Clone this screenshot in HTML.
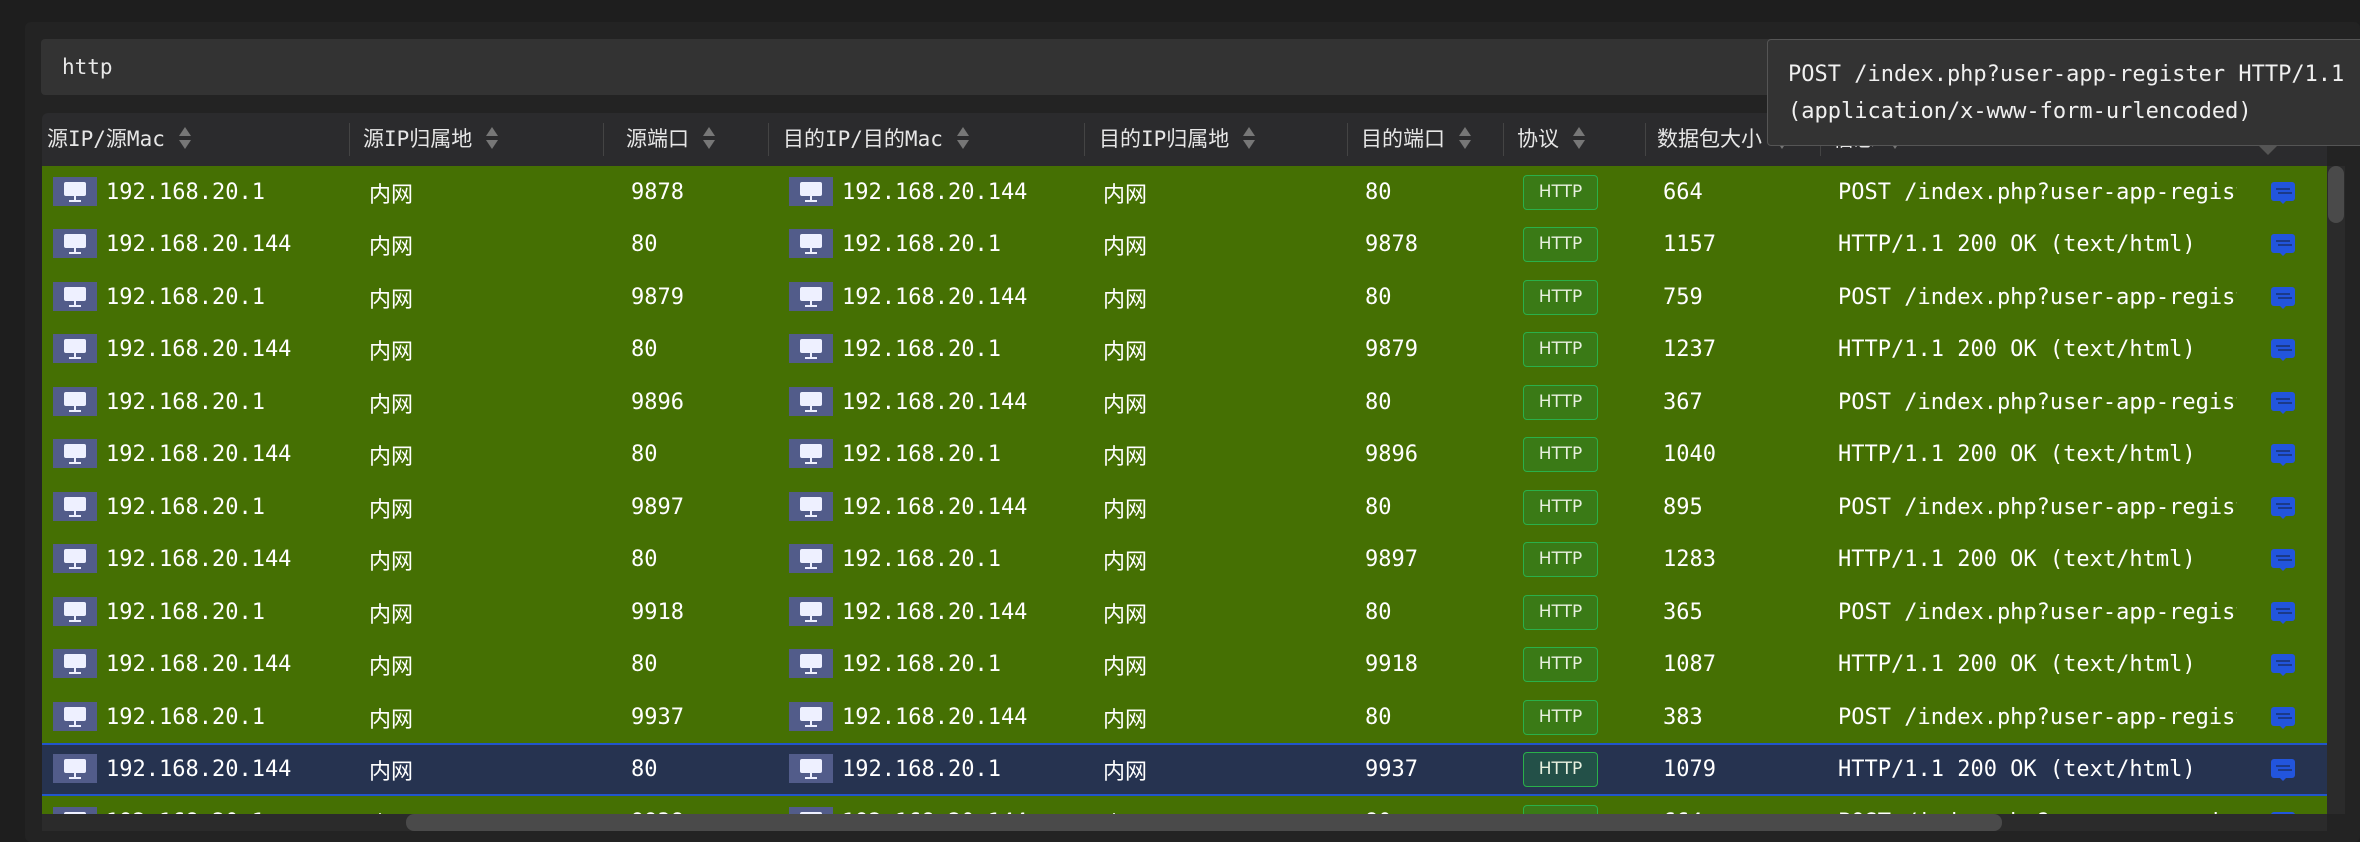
<!DOCTYPE html>
<html><head><meta charset="utf-8">
<style>
*{margin:0;padding:0;box-sizing:border-box}
body{width:2360px;height:842px;background:#1e1e1e;overflow:hidden;position:relative;font-family:"DejaVu Sans Mono","Liberation Mono","Noto Sans CJK SC",monospace;color:#fff}
.panel{position:absolute;left:25px;top:22px;width:2335px;height:820px;background:#232323;border-radius:6px}
.input{position:absolute;left:41px;top:39px;width:2319px;height:56px;background:#333;border-radius:4px;font-size:21px;line-height:56px;padding-left:21px;color:#e8e8e8}
.head{position:absolute;left:42px;top:113px;width:2285px;height:53px;background:#2b2b2d;border-radius:6px 6px 0 0;font-family:"DejaVu Sans Mono","Noto Sans CJK SC",monospace;font-size:21px;color:#e6e6e6}
.head span{position:absolute;top:0;line-height:53px;white-space:nowrap}
.sep{position:absolute;top:10px;width:1px;height:33px;background:#444}
.ar{display:inline-block;vertical-align:middle;margin-left:14px;width:12px;height:22px;position:relative;top:-2px}
.ar:before{content:"";position:absolute;left:0;top:0;border-left:6px solid transparent;border-right:6px solid transparent;border-bottom:9px solid #777}
.ar:after{content:"";position:absolute;left:0;bottom:0;border-left:6px solid transparent;border-right:6px solid transparent;border-top:9px solid #777}
.rows{position:absolute;left:42px;top:166px;width:2285px;height:648px;overflow:hidden}
.r{position:absolute;left:0;width:2285px;height:52.5px;background:#457003;font-size:22px}
.r.sel{background:#263350;border-top:2px solid #2255cc;border-bottom:2px solid #2255cc}
.r div{position:absolute;top:1px;line-height:52px;white-space:nowrap}
.r.sel div{line-height:48px}
.pc{position:absolute;top:11px;width:44px;height:29px;background:#525c8a}
.r.sel .pc{top:9px}
.pc:before{content:"";position:absolute;left:11px;top:5px;width:22px;height:14px;background:#eef0ff;border-radius:2px}
.pc:after{content:"";position:absolute;left:16px;top:19px;width:12px;height:6px;background:linear-gradient(#eef0ff,#eef0ff) 5px 0/2px 4px no-repeat,linear-gradient(#eef0ff,#eef0ff) 0 4px/12px 2px no-repeat}
.cjk{font-family:"Noto Sans CJK SC",sans-serif}
.r .b{position:absolute;top:9px;left:1481px;width:75px;height:35px;border:1.5px solid #2ab04a;border-radius:4px;background:#3a7a16;font-size:17px;text-align:center;line-height:32px;color:#e8f0e0;font-family:"DejaVu Sans",sans-serif}
.r.sel .b{background:#235048;top:7px;line-height:32px}
.r .info{left:1796px;width:399px;overflow:hidden}
.mi{position:absolute;left:2229px;top:16px;width:24px;height:19px;background:#2255dd;border-radius:3px}
.mi:before{content:"";position:absolute;left:5px;top:6px;width:14px;height:2px;background:#1b3a8a;box-shadow:2px 4px 0 0 #1b3a8a}
.mi:after{content:"";position:absolute;left:8px;top:18px;border-left:4px solid transparent;border-right:4px solid transparent;border-top:4px solid #2255dd}
.r.sel .mi{top:14px}
.vs{position:absolute;left:2327px;top:166px;width:18px;height:648px;background:#2b2b2b}
.vs i{position:absolute;left:1px;top:0;width:16px;height:57px;background:#4a4a4a;border-radius:8px}
.hs{position:absolute;left:42px;top:814px;width:2285px;height:17px;background:#2b2b2b}
.hs i{position:absolute;left:364px;top:0;width:1596px;height:17px;background:#4a4a4a;border-radius:8px}
.tip{position:absolute;left:1767px;top:39px;width:600px;height:107px;background:#333;border:1px solid #555;border-radius:4px;font-size:22px;color:#f0f0f0;padding:16px 0 0 20px;line-height:37px;white-space:nowrap}
.tip:after{content:"";position:absolute;left:490px;bottom:-10px;border-left:10px solid transparent;border-right:10px solid transparent;border-top:10px solid #555}
</style></head><body>
<div class="panel"></div>
<div class="input">http</div>
<div class="head">
<span style="left:5px">源IP/源Mac<i class="ar"></i></span>
<div class="sep" style="left:307px"></div>
<span style="left:321px">源IP归属地<i class="ar"></i></span>
<div class="sep" style="left:561px"></div>
<span style="left:584px">源端口<i class="ar"></i></span>
<div class="sep" style="left:726px"></div>
<span style="left:741px">目的IP/目的Mac<i class="ar"></i></span>
<div class="sep" style="left:1042px"></div>
<span style="left:1057px">目的IP归属地<i class="ar"></i></span>
<div class="sep" style="left:1305px"></div>
<span style="left:1319px">目的端口<i class="ar"></i></span>
<div class="sep" style="left:1461px"></div>
<span style="left:1475px">协议<i class="ar"></i></span>
<div class="sep" style="left:1603px"></div>
<span style="left:1615px">数据包大小<i class="ar"></i></span>
<div class="sep" style="left:1778px"></div>
<span style="left:1791px">信息<i class="ar"></i></span>
</div>
<div class="rows">
<div class="r" style="top:0"><i class="pc" style="left:11px"></i><div style="left:64px">192.168.20.1</div><div class="cjk" style="left:327px">内网</div><div style="left:589px">9878</div><i class="pc" style="left:747px"></i><div style="left:800px">192.168.20.144</div><div class="cjk" style="left:1061px">内网</div><div style="left:1323px">80</div><div class="b">HTTP</div><div style="left:1621px">664</div><div class="info">POST /index.php?user-app-register HTTP/1.1</div><i class="mi"></i></div>
<div class="r" style="top:52.45px"><i class="pc" style="left:11px"></i><div style="left:64px">192.168.20.144</div><div class="cjk" style="left:327px">内网</div><div style="left:589px">80</div><i class="pc" style="left:747px"></i><div style="left:800px">192.168.20.1</div><div class="cjk" style="left:1061px">内网</div><div style="left:1323px">9878</div><div class="b">HTTP</div><div style="left:1621px">1157</div><div class="info">HTTP/1.1 200 OK (text/html)</div><i class="mi"></i></div>
<div class="r" style="top:104.9px"><i class="pc" style="left:11px"></i><div style="left:64px">192.168.20.1</div><div class="cjk" style="left:327px">内网</div><div style="left:589px">9879</div><i class="pc" style="left:747px"></i><div style="left:800px">192.168.20.144</div><div class="cjk" style="left:1061px">内网</div><div style="left:1323px">80</div><div class="b">HTTP</div><div style="left:1621px">759</div><div class="info">POST /index.php?user-app-register HTTP/1.1</div><i class="mi"></i></div>
<div class="r" style="top:157.35px"><i class="pc" style="left:11px"></i><div style="left:64px">192.168.20.144</div><div class="cjk" style="left:327px">内网</div><div style="left:589px">80</div><i class="pc" style="left:747px"></i><div style="left:800px">192.168.20.1</div><div class="cjk" style="left:1061px">内网</div><div style="left:1323px">9879</div><div class="b">HTTP</div><div style="left:1621px">1237</div><div class="info">HTTP/1.1 200 OK (text/html)</div><i class="mi"></i></div>
<div class="r" style="top:209.8px"><i class="pc" style="left:11px"></i><div style="left:64px">192.168.20.1</div><div class="cjk" style="left:327px">内网</div><div style="left:589px">9896</div><i class="pc" style="left:747px"></i><div style="left:800px">192.168.20.144</div><div class="cjk" style="left:1061px">内网</div><div style="left:1323px">80</div><div class="b">HTTP</div><div style="left:1621px">367</div><div class="info">POST /index.php?user-app-register HTTP/1.1</div><i class="mi"></i></div>
<div class="r" style="top:262.25px"><i class="pc" style="left:11px"></i><div style="left:64px">192.168.20.144</div><div class="cjk" style="left:327px">内网</div><div style="left:589px">80</div><i class="pc" style="left:747px"></i><div style="left:800px">192.168.20.1</div><div class="cjk" style="left:1061px">内网</div><div style="left:1323px">9896</div><div class="b">HTTP</div><div style="left:1621px">1040</div><div class="info">HTTP/1.1 200 OK (text/html)</div><i class="mi"></i></div>
<div class="r" style="top:314.7px"><i class="pc" style="left:11px"></i><div style="left:64px">192.168.20.1</div><div class="cjk" style="left:327px">内网</div><div style="left:589px">9897</div><i class="pc" style="left:747px"></i><div style="left:800px">192.168.20.144</div><div class="cjk" style="left:1061px">内网</div><div style="left:1323px">80</div><div class="b">HTTP</div><div style="left:1621px">895</div><div class="info">POST /index.php?user-app-register HTTP/1.1</div><i class="mi"></i></div>
<div class="r" style="top:367.15px"><i class="pc" style="left:11px"></i><div style="left:64px">192.168.20.144</div><div class="cjk" style="left:327px">内网</div><div style="left:589px">80</div><i class="pc" style="left:747px"></i><div style="left:800px">192.168.20.1</div><div class="cjk" style="left:1061px">内网</div><div style="left:1323px">9897</div><div class="b">HTTP</div><div style="left:1621px">1283</div><div class="info">HTTP/1.1 200 OK (text/html)</div><i class="mi"></i></div>
<div class="r" style="top:419.6px"><i class="pc" style="left:11px"></i><div style="left:64px">192.168.20.1</div><div class="cjk" style="left:327px">内网</div><div style="left:589px">9918</div><i class="pc" style="left:747px"></i><div style="left:800px">192.168.20.144</div><div class="cjk" style="left:1061px">内网</div><div style="left:1323px">80</div><div class="b">HTTP</div><div style="left:1621px">365</div><div class="info">POST /index.php?user-app-register HTTP/1.1</div><i class="mi"></i></div>
<div class="r" style="top:472.05px"><i class="pc" style="left:11px"></i><div style="left:64px">192.168.20.144</div><div class="cjk" style="left:327px">内网</div><div style="left:589px">80</div><i class="pc" style="left:747px"></i><div style="left:800px">192.168.20.1</div><div class="cjk" style="left:1061px">内网</div><div style="left:1323px">9918</div><div class="b">HTTP</div><div style="left:1621px">1087</div><div class="info">HTTP/1.1 200 OK (text/html)</div><i class="mi"></i></div>
<div class="r" style="top:524.5px"><i class="pc" style="left:11px"></i><div style="left:64px">192.168.20.1</div><div class="cjk" style="left:327px">内网</div><div style="left:589px">9937</div><i class="pc" style="left:747px"></i><div style="left:800px">192.168.20.144</div><div class="cjk" style="left:1061px">内网</div><div style="left:1323px">80</div><div class="b">HTTP</div><div style="left:1621px">383</div><div class="info">POST /index.php?user-app-register HTTP/1.1</div><i class="mi"></i></div>
<div class="r sel" style="top:577px"><i class="pc" style="left:11px"></i><div style="left:64px">192.168.20.144</div><div class="cjk" style="left:327px">内网</div><div style="left:589px">80</div><i class="pc" style="left:747px"></i><div style="left:800px">192.168.20.1</div><div class="cjk" style="left:1061px">内网</div><div style="left:1323px">9937</div><div class="b">HTTP</div><div style="left:1621px">1079</div><div class="info">HTTP/1.1 200 OK (text/html)</div><i class="mi"></i></div>
<div class="r" style="top:630px"><i class="pc" style="left:11px"></i><div style="left:64px">192.168.20.1</div><div class="cjk" style="left:327px">内网</div><div style="left:589px">9938</div><i class="pc" style="left:747px"></i><div style="left:800px">192.168.20.144</div><div class="cjk" style="left:1061px">内网</div><div style="left:1323px">80</div><div class="b">HTTP</div><div style="left:1621px">664</div><div class="info">POST /index.php?user-app-register HTTP/1.1</div><i class="mi"></i></div>
</div>
<div class="vs"><i></i></div>
<div class="hs"><i></i></div>
<div class="tip">POST /index.php?user-app-register HTTP/1.1<br>(application/x-www-form-urlencoded)</div>
</body></html>
